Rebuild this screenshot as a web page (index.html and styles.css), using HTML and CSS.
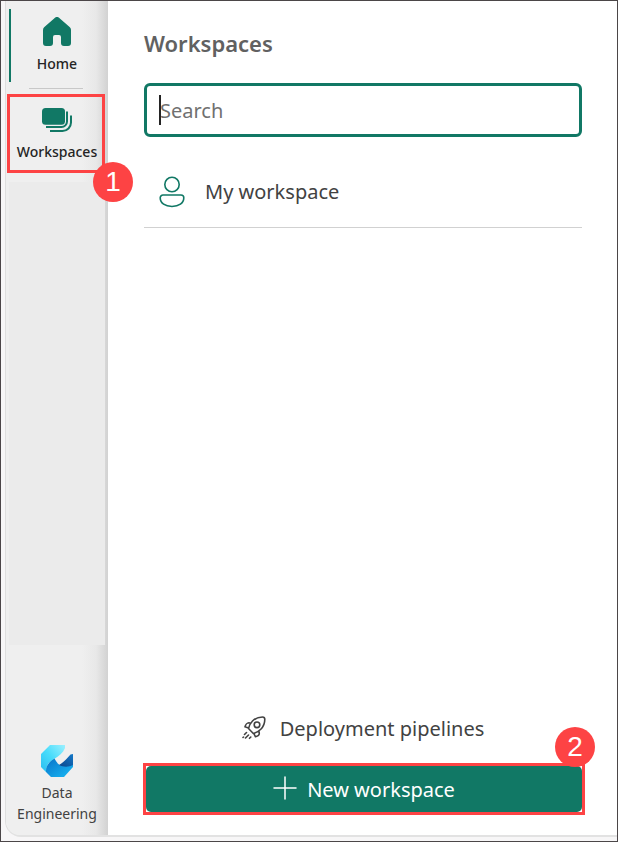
FILE: index.html
```html
<!DOCTYPE html>
<html lang="en">
<head>
<meta charset="utf-8">
<meta name="viewport" content="width=device-width, initial-scale=1">
<title>Workspaces</title>
<link rel="stylesheet" href="styles.css">
</head>
<body>
<div class="app">
  <nav class="rail">
    <button class="rail-item home" type="button">
      <svg width="28" height="30" viewBox="0 0 28 30"><path fill="#117865" d="M12 .8a3 3 0 0 1 4 0l10.600 9.100A4 4 0 0 1 28 13v13a3 3 0 0 1-3 3h-4a3 3 0 0 1-3-3v-6a2 2 0 0 0-2-2h-4a2 2 0 0 0-2 2v6a3 3 0 0 1-3 3H3a3 3 0 0 1-3-3V13a4 4 0 0 1 1.400-3z"/></svg>
      <span>Home</span>
    </button>
    <hr class="rail-divider">
    <button class="rail-item workspaces" type="button">
      <svg width="30" height="26" viewBox="0 0 30 26"><rect x="0" y="0" width="23" height="16.800" rx="3.500" fill="#117865"/><g fill="none" stroke="#117865" stroke-width="2"><path d="M25 3.500v10a5.500 5.500 0 0 1-5.500 5.500H4M29 7.500v7a8.500 8.500 0 0 1-8.500 8.500H8"/></g></svg>
      <span>Workspaces</span>
      <span class="badge badge-one">1</span>
    </button>
    <div class="rail-space"></div>
    <button class="rail-item experience" type="button">
      <svg width="32" height="32" viewBox="0 0 32 32">
        <defs>
          <linearGradient id="light" x1="0" y1="1" x2="1" y2="0"><stop offset="0" stop-color="#29bdf0"/><stop offset=".5" stop-color="#48dcfb"/><stop offset="1" stop-color="#9cf0ff"/></linearGradient>
          <linearGradient id="mid" x1="0" y1="0" x2="1" y2="1"><stop offset="0" stop-color="#0873c9"/><stop offset="1" stop-color="#19baf5"/></linearGradient>
          <linearGradient id="dark" x1="0" y1="1" x2="1" y2="0"><stop offset="0" stop-color="#0b468b"/><stop offset="1" stop-color="#1478c8"/></linearGradient>
        </defs>
        <path fill="url(#light)" d="M9 0h15v3c-2 5-6 8-11 11-6 3.500-8 7-8 13L0 22V9z"/>
        <path fill="url(#mid)" d="M13.500 13.500c2 4 4 6 5.500 6.500 4 1 9 1 13-1v3l-9 10H10l-5-5c-.5-6 3-10 8.500-13.500z"/>
        <path fill="url(#dark)" d="M18 20C23 17.500 26 13 29.500 9.500L32 9v11c-5 2.500-10 2-14 0z"/>
      </svg>
      <span>Data<br>Engineering</span>
    </button>
  </nav>
  <main class="panel">
    <h1>Workspaces</h1>
    <div class="search">
      <input type="text" placeholder="Search" aria-label="Search">
      <span class="caret"></span>
    </div>
    <a class="workspace-row" href="#">
      <svg width="26" height="32" viewBox="0 0 26 32"><g fill="none" stroke="#117865" stroke-width="1.600"><circle cx="13" cy="8.500" r="7.200"/><path d="M4 19h18a2.800 2.800 0 0 1 2.800 2.800c0 5.500-5 8.700-11.800 8.700S1.200 27.300 1.200 21.800A2.800 2.800 0 0 1 4 19z"/></g></svg>
      <span>My workspace</span>
    </a>
    <div class="actions">
      <a class="pipelines" href="#">
        <svg width="24" height="26" viewBox="0 0 24 26"><g fill="none" stroke="#424242" stroke-width="1.600" stroke-linecap="round" stroke-linejoin="round"><path d="M6.500 12.500C7.200 9.500 8.500 7 10.500 5 13.500 2 17 1 20.500 1c1.500 0 2.300.8 2.300 2.300 0 3.500-1 7-4 10-2 2-4.500 3.500-7.500 4.200zM8.500 7.300 6.800 6.800c-1.500 0-3.300 2-3.800 4l3.500 1.200M17 15.300l.3 2c0 1.500-1.800 3-3.800 3.500l-1.700-3.300"/><circle cx="15" cy="8.800" r="2.800"/><path d="m4.500 16.500-2 2M6.500 19l-3 3M1 21.500l.5-.5M8.800 21l-1.300 1.300"/></g></svg>
        <span>Deployment pipelines</span>
      </a>
      <div class="callout">
        <button class="new-workspace" type="button">
          <svg width="24" height="26" viewBox="0 0 24 26"><path d="M12 1v22M1 12h22" stroke="#fff" stroke-width="1.500" stroke-linecap="round"/></svg>
          <span>New workspace</span>
        </button>
        <span class="badge badge-two">2</span>
      </div>
    </div>
  </main>
</div>
</body>
</html>
```
FILE: styles.css
```css
* { box-sizing: border-box; }

body {
  display: flex;
  min-height: 100vh;
  margin: 0;
  padding: 0 0 4px 4px;
  border: 1px solid #4b4648;
  background: #f7f6f7;
  font-family: "Noto Sans", sans-serif;
  color: #424242;
}

button {
  margin: 0;
  border: 0;
  background: none;
  font-family: inherit;
  color: inherit;
}

a { color: inherit; text-decoration: none; }
svg { display: block; flex: none; }

.app {
  display: flex;
  flex: 1;
  border-left: 1px solid #dedede;
  border-bottom: 2px solid #e2e2e2;
  border-radius: 0 0 0 16px;
}

.rail {
  display: flex;
  flex: none;
  flex-direction: column;
  width: 102px;
  padding: 8px 3px 0 1px;
  border-radius: 0 0 0 14px;
  background: linear-gradient(to right, #efefef 76px, #e8e8e8 90px, #d2d2d2 102px);
}

.rail-item {
  display: flex;
  flex-direction: column;
  align-items: center;
  padding: 0 0 0 2px;
  font-size: 14px;
  line-height: 21px;
}

.home {
  height: 73px;
  margin-left: 2px;
  padding: 8px 2px 0 0;
  gap: 6px;
  border-left: 2px solid #117865;
  color: #242424;
  font-weight: 500;
}

.rail-divider {
  width: 54px;
  height: 1px;
  margin: 6px auto 5px;
  border: 0;
  background: #c8c8c8;
}

.workspaces {
  position: relative;
  height: 79px;
  padding-top: 11px;
  gap: 7px;
  border: 3px solid #fd4344;
  color: #242424;
  font-weight: 500;
}

.rail-space {
  flex: 1;
  margin: 9px 0 0 2px;
  background: #ebebeb;
}

.experience {
  padding-top: 100px;
  padding-bottom: 11px;
  gap: 5px;
}

.badge {
  position: absolute;
  display: flex;
  align-items: center;
  justify-content: center;
  width: 40px;
  height: 40px;
  border-radius: 50%;
  background: #fd4344;
  color: #fff;
  font-family: "Liberation Sans", sans-serif;
  font-size: 28px;
  font-weight: 400;
  line-height: 40px;
}

.badge-one { right: -31px; bottom: -32px; }
.badge-two { top: -39px; right: -13px; }

.panel {
  display: flex;
  flex: 1;
  flex-direction: column;
  padding: 26px 35px 20px 36px;
  background: #fff;
}

h1 {
  margin: 0 0 24px;
  font-size: 22px;
  font-weight: 600;
  line-height: 32px;
  color: #616161;
}

.search { position: relative; }

.search input {
  display: block;
  width: 100%;
  height: 54px;
  padding: 0 13px;
  border: 3px solid #117865;
  border-radius: 6px;
  outline: 0;
  background: #fff;
  font-family: inherit;
  font-size: 20px;
  color: #242424;
}

.search input::placeholder { color: #707070; opacity: 1; }

.caret {
  position: absolute;
  top: 12px;
  left: 15px;
  width: 2px;
  height: 30px;
  background: #242424;
}

.workspace-row {
  display: flex;
  align-items: center;
  height: 91px;
  padding: 19px 15px 0;
  gap: 20px;
  border-bottom: 1px solid #d1d1d1;
  font-size: 20px;
}

.actions { margin-top: auto; }

.pipelines {
  display: flex;
  align-items: center;
  justify-content: center;
  margin-bottom: 18px;
  gap: 14px;
  font-size: 20px;
  line-height: 32px;
}

.callout {
  position: relative;
  margin: 0 -3px 0 -1px;
  border: 3px solid #fd4344;
}

.new-workspace {
  display: flex;
  align-items: center;
  justify-content: center;
  width: 100%;
  height: 46px;
  gap: 10px;
  border-radius: 5px;
  background: #117865;
  font-size: 20px;
  color: #fff;
}
```
